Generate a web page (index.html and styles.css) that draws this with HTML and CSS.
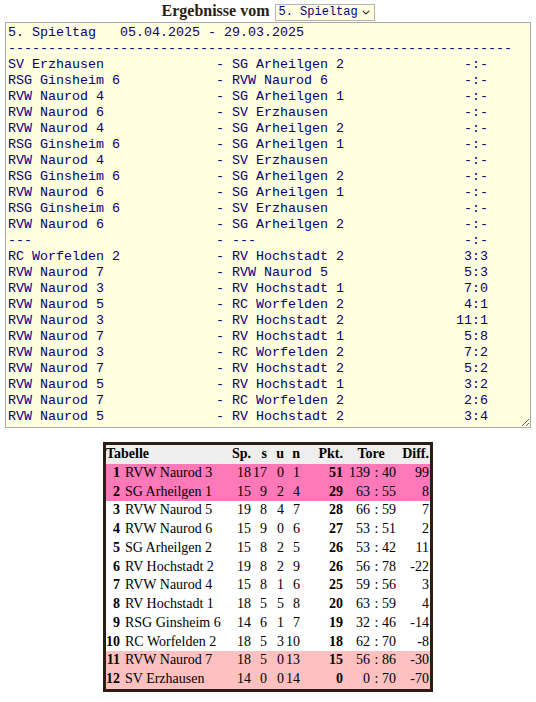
FILE: index.html
```html
<!DOCTYPE html>
<html lang="de">
<head>
<meta charset="utf-8">
<title>Ergebnisse</title>
<link rel="stylesheet" href="styles.css">
</head>
<body>
<div class="top">
  <span class="title">Ergebnisse vom</span>
  <span class="sel">
    <select class="sel-box"><option>5. Spieltag</option></select>
    <svg class="chev" width="8" height="5" viewBox="0 0 8 5"><path d="M0.8 0.8 L4 4 L7.2 0.8" fill="none" stroke="#333" stroke-width="1.1"/></svg>
  </span>
</div>
<textarea class="res" rows="25" wrap="off" spellcheck="false">5. Spieltag   05.04.2025 - 29.03.2025
---------------------------------------------------------------
SV Erzhausen              - SG Arheilgen 2               -:-
RSG Ginsheim 6            - RVW Naurod 6                 -:-
RVW Naurod 4              - SG Arheilgen 1               -:-
RVW Naurod 6              - SV Erzhausen                 -:-
RVW Naurod 4              - SG Arheilgen 2               -:-
RSG Ginsheim 6            - SG Arheilgen 1               -:-
RVW Naurod 4              - SV Erzhausen                 -:-
RSG Ginsheim 6            - SG Arheilgen 2               -:-
RVW Naurod 6              - SG Arheilgen 1               -:-
RSG Ginsheim 6            - SV Erzhausen                 -:-
RVW Naurod 6              - SG Arheilgen 2               -:-
---                       - ---                          -:-
RC Worfelden 2            - RV Hochstadt 2               3:3
RVW Naurod 7              - RVW Naurod 5                 5:3
RVW Naurod 3              - RV Hochstadt 1               7:0
RVW Naurod 5              - RC Worfelden 2               4:1
RVW Naurod 3              - RV Hochstadt 2              11:1
RVW Naurod 7              - RV Hochstadt 1               5:8
RVW Naurod 3              - RC Worfelden 2               7:2
RVW Naurod 7              - RV Hochstadt 2               5:2
RVW Naurod 5              - RV Hochstadt 1               3:2
RVW Naurod 7              - RC Worfelden 2               2:6
RVW Naurod 5              - RV Hochstadt 2               3:4</textarea>

<table class="tab">
  <colgroup>
    <col class="c-rk"><col class="c-nm"><col class="c-sp"><col class="c-s"><col class="c-u"><col class="c-n"><col class="c-pk"><col class="c-gf"><col class="c-co"><col class="c-ga"><col class="c-df">
  </colgroup>
  <tr class="head">
    <th colspan="2" class="h-tab">Tabelle</th>
    <th class="num">Sp.</th><th class="num">s</th><th class="num">u</th><th class="num">n</th>
    <th class="num">Pkt.</th><th colspan="3" class="h-tore">Tore</th><th class="num">Diff.</th>
  </tr>
  <tr class="up"><td class="rk">1</td><td class="nm">RVW Naurod 3</td><td class="num">18</td><td class="num">17</td><td class="num">0</td><td class="num">1</td><td class="num pk">51</td><td class="num">139</td><td class="co">:</td><td class="ga">40</td><td class="num">99</td></tr>
  <tr class="up"><td class="rk">2</td><td class="nm">SG Arheilgen 1</td><td class="num">15</td><td class="num">9</td><td class="num">2</td><td class="num">4</td><td class="num pk">29</td><td class="num">63</td><td class="co">:</td><td class="ga">55</td><td class="num">8</td></tr>
  <tr><td class="rk">3</td><td class="nm">RVW Naurod 5</td><td class="num">19</td><td class="num">8</td><td class="num">4</td><td class="num">7</td><td class="num pk">28</td><td class="num">66</td><td class="co">:</td><td class="ga">59</td><td class="num">7</td></tr>
  <tr><td class="rk">4</td><td class="nm">RVW Naurod 6</td><td class="num">15</td><td class="num">9</td><td class="num">0</td><td class="num">6</td><td class="num pk">27</td><td class="num">53</td><td class="co">:</td><td class="ga">51</td><td class="num">2</td></tr>
  <tr><td class="rk">5</td><td class="nm">SG Arheilgen 2</td><td class="num">15</td><td class="num">8</td><td class="num">2</td><td class="num">5</td><td class="num pk">26</td><td class="num">53</td><td class="co">:</td><td class="ga">42</td><td class="num">11</td></tr>
  <tr><td class="rk">6</td><td class="nm">RV Hochstadt 2</td><td class="num">19</td><td class="num">8</td><td class="num">2</td><td class="num">9</td><td class="num pk">26</td><td class="num">56</td><td class="co">:</td><td class="ga">78</td><td class="num">-22</td></tr>
  <tr><td class="rk">7</td><td class="nm">RVW Naurod 4</td><td class="num">15</td><td class="num">8</td><td class="num">1</td><td class="num">6</td><td class="num pk">25</td><td class="num">59</td><td class="co">:</td><td class="ga">56</td><td class="num">3</td></tr>
  <tr><td class="rk">8</td><td class="nm">RV Hochstadt 1</td><td class="num">18</td><td class="num">5</td><td class="num">5</td><td class="num">8</td><td class="num pk">20</td><td class="num">63</td><td class="co">:</td><td class="ga">59</td><td class="num">4</td></tr>
  <tr><td class="rk">9</td><td class="nm">RSG Ginsheim 6</td><td class="num">14</td><td class="num">6</td><td class="num">1</td><td class="num">7</td><td class="num pk">19</td><td class="num">32</td><td class="co">:</td><td class="ga">46</td><td class="num">-14</td></tr>
  <tr><td class="rk">10</td><td class="nm">RC Worfelden 2</td><td class="num">18</td><td class="num">5</td><td class="num">3</td><td class="num">10</td><td class="num pk">18</td><td class="num">62</td><td class="co">:</td><td class="ga">70</td><td class="num">-8</td></tr>
  <tr class="down"><td class="rk">11</td><td class="nm">RVW Naurod 7</td><td class="num">18</td><td class="num">5</td><td class="num">0</td><td class="num">13</td><td class="num pk">15</td><td class="num">56</td><td class="co">:</td><td class="ga">86</td><td class="num">-30</td></tr>
  <tr class="down"><td class="rk">12</td><td class="nm">SV Erzhausen</td><td class="num">14</td><td class="num">0</td><td class="num">0</td><td class="num">14</td><td class="num pk">0</td><td class="num">0</td><td class="co">:</td><td class="ga">70</td><td class="num">-70</td></tr>
</table>
</body>
</html>
```

FILE: styles.css
```css
html, body {
  margin: 0;
  padding: 0;
  background: #ffffff;
}
body {
  padding: 0 5px;
  font-family: "Liberation Serif", "Times New Roman", serif;
  color: #2b1d14;
}
.top {
  display: flex;
  justify-content: center;
  align-items: center;
  gap: 5px;
  height: 22px;
}
.title {
  font-size: 16px;
  font-weight: bold;
}
.sel {
  position: relative;
  display: block;
  width: 100px;
  height: 17px;
  margin-top: 2px;
}
.sel-box {
  appearance: none;
  -webkit-appearance: none;
  display: block;
  box-sizing: border-box;
  width: 100px;
  height: 17px;
  margin: 0;
  padding: 0 0 0 3px;
  border: 1px solid #b4b4b4;
  border-radius: 0;
  background: #ffffe0;
  color: #000080;
  font-family: "Liberation Mono", "Courier New", monospace;
  font-size: 12px;
  line-height: 15px;
  outline: none;
}
.chev {
  position: absolute;
  right: 5px;
  top: 6px;
  pointer-events: none;
}
.res {
  display: block;
  box-sizing: border-box;
  width: 100%;
  height: 406px;
  margin: 0;
  padding: 2px;
  border: 1px solid #a9a9a9;
  background: #ffffe0;
  color: #000080;
  font-family: "Liberation Mono", "Courier New", monospace;
  font-size: 13.333px;
  line-height: 16px;
  white-space: pre;
  overflow: hidden;
  outline: none;
}
.tab {
  margin: 14px auto 0;
  width: 330px;
  table-layout: fixed;
  border-collapse: separate;
  border-spacing: 0;
  border: 3px solid #2b1d14;
  font-family: "Liberation Serif", "Times New Roman", serif;
  font-size: 14px;
  color: #000;
}
.c-rk { width: 15px; }
.c-nm { width: 109px; }
.c-sp { width: 22px; }
.c-s { width: 16px; }
.c-u { width: 17px; }
.c-n { width: 16px; }
.c-pk { width: 43px; }
.c-gf { width: 27px; }
.c-co { width: 11px; }
.c-ga { width: 16px; }
.c-df { width: 32px; }
.tab th, .tab td {
  padding: 0;
  line-height: 18.75px;
  height: 18.75px;
  white-space: nowrap;
  overflow: visible;
}
.tab th {
  font-weight: bold;
}
.head {
  background: #eeeeee;
}
.h-tab {
  text-align: left;
}
.h-tore {
  text-align: center;
}
.num {
  text-align: right;
  padding-right: 1px !important;
}
.rk {
  text-align: right;
  font-weight: bold;
  padding-right: 1px !important;
}
.nm {
  text-align: left;
  padding-left: 4px !important;
}
.pk {
  font-weight: bold;
}
.co {
  text-align: center;
}
.ga {
  text-align: left;
}
.up {
  background: #ff78b8;
}
.down {
  background: #ffc0c0;
}
```
